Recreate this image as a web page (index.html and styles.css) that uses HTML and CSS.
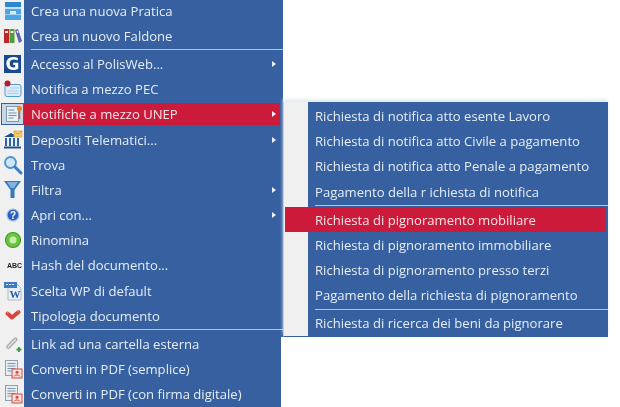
FILE: index.html
```html
<!DOCTYPE html>
<html>
<head>
  <meta charset="utf-8">
  <link rel="stylesheet" href="styles.css">
</head>
<body>
  <div class="menu">
    <div class="item">
      <span class="ico"><svg width="18" height="18" viewBox="0 0 18 18"><rect x="1" y="0" width="16" height="5" fill="#2f86d0"/><rect x="1" y="5" width="16" height="2" fill="#bfe0f6"/><rect x="1" y="7" width="16" height="11" fill="#4ea5e4"/><rect x="1" y="12" width="16" height="1" fill="#9fd0f0"/><rect x="6" y="9" width="6" height="3" fill="#d8eefb"/></svg></span>
      <span class="label">Crea una nuova Pratica</span>
    </div>
    <div class="item">
      <span class="ico"><svg width="18" height="18" viewBox="0 0 18 18"><rect x="0" y="2" width="5" height="14" fill="#b8282c"/><rect x="1" y="4" width="3" height="2" fill="#eed"/><rect x="5.500" y="2" width="5" height="14" fill="#4f9e3a"/><rect x="6.500" y="4" width="3" height="2" fill="#eed"/><path d="M11 3l3-1 4 12-3 2z" fill="#5b62b0"/><path d="M12.500 4l1.500-.5 .7 2-1.500 .5z" fill="#eed"/></svg></span>
      <span class="label">Crea un nuovo Faldone</span>
    </div>
    <div class="sep"></div>
    <div class="item">
      <span class="ico"><svg width="18" height="18" viewBox="0 0 18 18"><rect x="0" y="0" width="17" height="18" fill="#184a8c"/><text x="8.500" y="15" class="logo-g">G</text></svg></span>
      <span class="label">Accesso al PolisWeb...</span>
      <span class="arrow"></span>
    </div>
    <div class="item">
      <span class="ico"><svg width="18" height="18" viewBox="0 0 18 18"><rect x="1" y="4.500" width="16" height="12" rx="2" fill="#dcecf8" stroke="#4f9bd6"/><path d="M6 8h9M3.500 11h11M3.500 13.500h11" stroke="#a8cfec"/><circle cx="3.500" cy="3.500" r="3" fill="#b8182c"/></svg></span>
      <span class="label">Notifica a mezzo PEC</span>
    </div>
    <div class="item active">
      <span class="ico"><svg width="18" height="18" viewBox="0 0 18 18"><rect x="1.500" y="1.500" width="12" height="15" fill="#eaf1f4" stroke="#7f97a8"/><path d="M3.500 5h6M3.500 8h8M3.500 10.500h8M3.500 13h5" stroke="#6f93ac"/><path d="M14.500 5v9" stroke="#c9762a" stroke-width="1.500"/><circle cx="14.500" cy="3.500" r="2.500" fill="#e8892a"/></svg></span>
      <span class="label">Notifiche a mezzo UNEP</span>
      <span class="arrow"></span>
    </div>
    <div class="item">
      <span class="ico"><svg width="18" height="18" viewBox="0 0 18 18"><path d="M0 6l7-4 7 4z" fill="#1d4f96"/><path d="M1 7h2v8h-2zM5 7h2v8h-2zM9 7h2v8h-2zM13 7h2v8h-2z" fill="#2a62ad"/><rect x="0" y="15.500" width="17" height="2" fill="#1d4f96"/><rect x="10" y="0" width="8" height="6" fill="#f4cf6a" stroke="#d79f37" stroke-width=".6"/><path d="M10 0l4 3 4-3" fill="none" stroke="#c98b24" stroke-width=".7"/></svg></span>
      <span class="label">Depositi Telematici...</span>
      <span class="arrow"></span>
    </div>
    <div class="item">
      <span class="ico"><svg width="18" height="18" viewBox="0 0 18 18"><circle cx="6.500" cy="6.500" r="5.500" fill="#cfe6fa" stroke="#4a90d0" stroke-width="1.800"/><path d="M11 11l6 6" stroke="#3a7fc6" stroke-width="3" stroke-linecap="round"/></svg></span>
      <span class="label">Trova</span>
    </div>
    <div class="item">
      <span class="ico"><svg width="18" height="18" viewBox="0 0 18 18"><path d="M0 0h17l-6.500 9v8h-4v-8z" fill="#3279bd"/><path d="M3 1h11l-4 6h-3z" fill="#7fb4e0"/></svg></span>
      <span class="label">Filtra</span>
      <span class="arrow"></span>
    </div>
    <div class="item">
      <span class="ico"><svg width="18" height="18" viewBox="0 0 18 18"><circle cx="9" cy="9" r="6" fill="#2b5fc2" stroke="#a8c2ea" stroke-width="1.200"/><text x="9" y="12.500" class="logo-q">?</text></svg></span>
      <span class="label">Apri con...</span>
      <span class="arrow"></span>
    </div>
    <div class="item">
      <span class="ico"><svg width="18" height="18" viewBox="0 0 18 18"><circle cx="9" cy="9" r="7.500" fill="#6cc63c" stroke="#3f9c24" stroke-width="1.200"/><circle cx="9" cy="9" r="3.500" fill="#c6ecae"/></svg></span>
      <span class="label">Rinomina</span>
    </div>
    <div class="item">
      <span class="ico"><span class="abc">ABC</span></span>
      <span class="label">Hash del documento...</span>
    </div>
    <div class="item">
      <span class="ico"><svg width="18" height="18" viewBox="0 0 18 18"><path d="M4 2h9l4 4v12h-13z" fill="#e9eef4" stroke="#9aa8b8" stroke-width=".7"/><rect x="0" y="0" width="13" height="6" fill="#3f7cc4"/><path d="M2 2.500h9" stroke="#e4eefa" stroke-dasharray="2 1"/><text x="11" y="16" class="logo-w">W</text></svg></span>
      <span class="label">Scelta WP di default</span>
    </div>
    <div class="item">
      <span class="ico"><svg width="18" height="18" viewBox="0 0 18 18"><path d="M3.500 6.500l4.500 4 6.500-5.500" fill="none" stroke="#d8443a" stroke-width="4" stroke-linecap="round" stroke-linejoin="round"/><path d="M3 5.500l1.500 .5M13.500 4l1.500 0" stroke="#f3a79c"/></svg></span>
      <span class="label">Tipologia documento</span>
    </div>
    <div class="sep"></div>
    <div class="item">
      <span class="ico"><svg width="18" height="18" viewBox="0 0 18 18"><path d="M3 11l7-7c2-2 4 0 2 2l-7 7c-1 1-3-1-2-2z" fill="#e4e6e4" stroke="#a3a8a5" stroke-width="1.200"/><path d="M12.500 14.500h5M15 12v5" stroke="#3f9a3a" stroke-width="1.800"/></svg></span>
      <span class="label">Link ad una cartella esterna</span>
    </div>
    <div class="item">
      <span class="ico"><svg width="18" height="18" viewBox="0 0 18 18"><rect x="1.500" y="0.500" width="12" height="15" fill="#e8edf2" stroke="#8ea0b2"/><path d="M3.500 3.500h8M3.500 6h8M3.500 8.500h8M3.500 11h4" stroke="#7d95ad"/><rect x="8" y="9" width="10" height="9" fill="#f6e3de" stroke="#d4483c"/><circle cx="13" cy="12.300" r="1.500" fill="#d4483c"/><path d="M10 16.500c1-2 5-2 6 0" stroke="#d4483c" fill="none"/></svg></span>
      <span class="label">Converti in PDF (semplice)</span>
    </div>
    <div class="item">
      <span class="ico"><svg width="18" height="18" viewBox="0 0 18 18"><rect x="1.500" y="0.500" width="12" height="15" fill="#e8edf2" stroke="#8ea0b2"/><path d="M3.500 3.500h8M3.500 6h8M3.500 8.500h8M3.500 11h4" stroke="#7d95ad"/><rect x="8" y="9" width="10" height="9" fill="#f6e3de" stroke="#d4483c"/><circle cx="13" cy="12.300" r="1.500" fill="#d4483c"/><path d="M10 16.500c1-2 5-2 6 0" stroke="#d4483c" fill="none"/></svg></span>
      <span class="label">Converti in PDF (con firma digitale)</span>
    </div>
  </div>

  <div class="submenu">
    <div class="item"><span class="label">Richiesta di notifica atto esente Lavoro</span></div>
    <div class="item"><span class="label">Richiesta di notifica atto Civile a pagamento</span></div>
    <div class="item"><span class="label">Richiesta di notifica atto Penale a pagamento</span></div>
    <div class="item"><span class="label">Pagamento della r ichiesta di notifica</span></div>
    <div class="sep"></div>
    <div class="item active"><span class="label">Richiesta di pignoramento mobiliare</span></div>
    <div class="item"><span class="label">Richiesta di pignoramento immobiliare</span></div>
    <div class="item"><span class="label">Richiesta di pignoramento presso terzi</span></div>
    <div class="item"><span class="label">Pagamento della richiesta di pignoramento</span></div>
    <div class="sep"></div>
    <div class="item"><span class="label">Richiesta di ricerca dei beni da pignorare</span></div>
  </div>
</body>
</html>
```

FILE: styles.css
```css
* {
  margin: 0;
  padding: 0;
  box-sizing: border-box;
  font-family: "Open Sans", sans-serif;
}

body {
  background: white;
  height: 407px;
  overflow: hidden;
  position: relative;
}

/* the capture is a little soft */
.menu, .submenu {
  filter: blur(0.35px);
}

.menu {
  position: relative;
  width: 283px;
  margin-top: -2px;
  padding-bottom: 10px;
  background: linear-gradient(to right, #f0f0f0 24px, #36609f 24px);
}

/* the lower part of the capture is 2px narrower */
.menu::after {
  content: '';
  position: absolute;
  top: 339px;
  right: 0;
  bottom: 0;
  width: 2px;
  background: white;
}

.item {
  display: flex;
  align-items: center;
  height: 25.2px;
  font-size: 13.1px;
  color: #e6edf5;
}

.ico {
  display: flex;
  align-items: center;
  flex: none;
  width: 24px;
  height: 100%;
  padding-left: 4px;
}

.ico svg {
  overflow: visible;
}

.label {
  margin-left: 7px;
  white-space: nowrap;
}

.arrow {
  margin-left: auto;
  margin-right: 7px;
  border-left: 4px solid #eef2f7;
  border-top: 3.5px solid transparent;
  border-bottom: 3.5px solid transparent;
}

.sep {
  height: 3px;
  margin-left: 31px;
  background: #b4c4dc;
  border-top: 1px solid #36609f;
  border-bottom: 1px solid #36609f;
}

.menu .item.active {
  height: 22.2px;
  margin: 1.2px 3px 1.8px 1px;
  background: #cc1a3a;
  color: #f6e4e8;
}

.menu .item.active .ico {
  width: 23px;
  padding-left: 3px;
  background: #c6d7ea;
  border: 1px solid #36609f;
}

.menu .item.active .arrow {
  margin-right: 4px;
}

.submenu {
  position: absolute;
  top: 102px;
  left: 283px;
  width: 325px;
  height: 235px;
  padding-top: 1.400px;
  border-left: 1px solid #c3cfe0;
  border-bottom: 1px solid #36609f;
  background: linear-gradient(to right, #f0f0f0 24px, #36609f 24px);
  box-shadow: 0 -3px 3px #e6ecf4;
}

.submenu .label {
  margin-left: 31px;
}

.submenu .item.active {
  margin: 0 2px 0 1px;
  background: #cc1a3a;
  color: #f6e4e8;
}

.submenu .item.active .label {
  margin-left: 30px;
}

.abc {
  font-family: "Liberation Sans", sans-serif;
  font-size: 7px;
  font-weight: bold;
  color: #222;
  margin-left: 3px;
}

.logo-g {
  font-family: "DejaVu Sans", sans-serif;
  font-size: 17px;
  font-weight: bold;
  fill: white;
  text-anchor: middle;
}

.logo-q {
  font-family: "Liberation Sans", sans-serif;
  font-size: 10px;
  font-weight: bold;
  fill: white;
  text-anchor: middle;
}

.logo-w {
  font-family: "Liberation Serif", serif;
  font-size: 11px;
  font-weight: bold;
  fill: #2a5ca8;
  text-anchor: middle;
}
```
